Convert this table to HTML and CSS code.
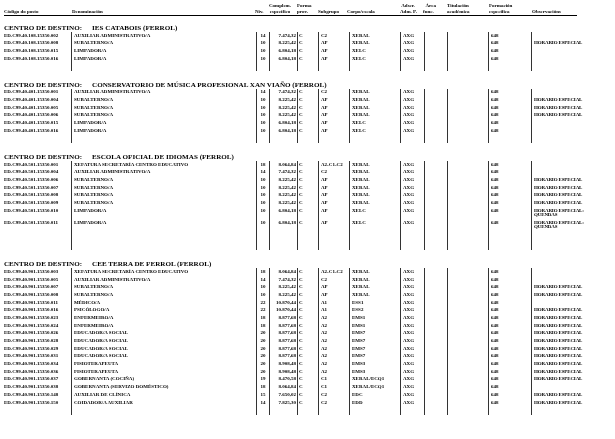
FILE: index.html
```html
<!DOCTYPE html>
<html lang="gl">
<head>
<meta charset="utf-8">
<title>Relación de postos</title>
<link rel="stylesheet" href="styles.css">
</head>
<body>
<div class="page">
  <div class="head">
    <div class="h">Código do posto</div>
    <div class="h">Denominación</div>
    <div class="h">Niv.</div>
    <div class="h c">Complem.<br>específico</div>
    <div class="h">Forma<br>prov.</div>
    <div class="h">Subgrupo</div>
    <div class="h">Corpo/escala</div>
    <div class="h">&nbsp;Adscr.<br>Adm. P.</div>
    <div class="h">&nbsp;&nbsp;Área<br>func.</div>
    <div class="h">Titulación<br>académica</div>
    <div class="h">Formación<br>específica</div>
    <div class="h">Observacións</div>
  </div>

  <section class="sec">
    <h2 class="title"><span class="lbl">CENTRO DE DESTINO:</span>IES CATABOIS (FERROL)</h2>
    <div class="row"><div>ED.C99.40.108.15350.002</div><div>AUXILIAR ADMINISTRATIVO/A</div><div>14</div><div>7.474,32</div><div>C</div><div>C2</div><div>XERAL</div><div>AXG</div><div></div><div></div><div>648</div><div></div></div>
    <div class="row"><div>ED.C99.40.108.15350.008</div><div>SUBALTERNO/A</div><div>10</div><div>8.225,42</div><div>C</div><div>AP</div><div>XERAL</div><div>AXG</div><div></div><div></div><div>648</div><div>HORARIO ESPECIAL</div></div>
    <div class="row"><div>ED.C99.40.108.15350.015</div><div>LIMPADOR/A</div><div>10</div><div>6.804,18</div><div>C</div><div>AP</div><div>XELC</div><div>AXG</div><div></div><div></div><div>648</div><div></div></div>
    <div class="row"><div>ED.C99.40.108.15350.016</div><div>LIMPADOR/A</div><div>10</div><div>6.804,18</div><div>C</div><div>AP</div><div>XELC</div><div>AXG</div><div></div><div></div><div>648</div><div></div></div>
    <div class="row end"><div></div><div></div><div></div><div></div><div></div><div></div><div></div><div></div><div></div><div></div><div></div><div></div></div>
  </section>

  <section class="sec">
    <h2 class="title"><span class="lbl">CENTRO DE DESTINO:</span>CONSERVATORIO DE MÚSICA PROFESIONAL XAN VIAÑO (FERROL)</h2>
    <div class="row"><div>ED.C99.40.401.15350.001</div><div>AUXILIAR ADMINISTRATIVO/A</div><div>14</div><div>7.474,32</div><div>C</div><div>C2</div><div>XERAL</div><div>AXG</div><div></div><div></div><div>648</div><div></div></div>
    <div class="row"><div>ED.C99.40.401.15350.004</div><div>SUBALTERNO/A</div><div>10</div><div>8.225,42</div><div>C</div><div>AP</div><div>XERAL</div><div>AXG</div><div></div><div></div><div>648</div><div>HORARIO ESPECIAL</div></div>
    <div class="row"><div>ED.C99.40.401.15350.005</div><div>SUBALTERNO/A</div><div>10</div><div>8.225,42</div><div>C</div><div>AP</div><div>XERAL</div><div>AXG</div><div></div><div></div><div>648</div><div>HORARIO ESPECIAL</div></div>
    <div class="row"><div>ED.C99.40.401.15350.006</div><div>SUBALTERNO/A</div><div>10</div><div>8.225,42</div><div>C</div><div>AP</div><div>XERAL</div><div>AXG</div><div></div><div></div><div>648</div><div>HORARIO ESPECIAL</div></div>
    <div class="row"><div>ED.C99.40.401.15350.015</div><div>LIMPADOR/A</div><div>10</div><div>6.804,18</div><div>C</div><div>AP</div><div>XELC</div><div>AXG</div><div></div><div></div><div>648</div><div></div></div>
    <div class="row"><div>ED.C99.40.401.15350.016</div><div>LIMPADOR/A</div><div>10</div><div>6.804,18</div><div>C</div><div>AP</div><div>XELC</div><div>AXG</div><div></div><div></div><div>648</div><div></div></div>
    <div class="row end"><div></div><div></div><div></div><div></div><div></div><div></div><div></div><div></div><div></div><div></div><div></div><div></div></div>
  </section>

  <section class="sec">
    <h2 class="title"><span class="lbl">CENTRO DE DESTINO:</span>ESCOLA OFICIAL DE IDIOMAS (FERROL)</h2>
    <div class="row"><div>ED.C99.40.501.15350.001</div><div>XEFATURA SECRETARÍA CENTRO EDUCATIVO</div><div>18</div><div>8.064,84</div><div>C</div><div>A2-C1-C2</div><div>XERAL</div><div>AXG</div><div></div><div></div><div>648</div><div></div></div>
    <div class="row"><div>ED.C99.40.501.15350.004</div><div>AUXILIAR ADMINISTRATIVO/A</div><div>14</div><div>7.474,32</div><div>C</div><div>C2</div><div>XERAL</div><div>AXG</div><div></div><div></div><div>648</div><div></div></div>
    <div class="row"><div>ED.C99.40.501.15350.006</div><div>SUBALTERNO/A</div><div>10</div><div>8.225,42</div><div>C</div><div>AP</div><div>XERAL</div><div>AXG</div><div></div><div></div><div>648</div><div>HORARIO ESPECIAL</div></div>
    <div class="row"><div>ED.C99.40.501.15350.007</div><div>SUBALTERNO/A</div><div>10</div><div>8.225,42</div><div>C</div><div>AP</div><div>XERAL</div><div>AXG</div><div></div><div></div><div>648</div><div>HORARIO ESPECIAL</div></div>
    <div class="row"><div>ED.C99.40.501.15350.008</div><div>SUBALTERNO/A</div><div>10</div><div>8.225,42</div><div>C</div><div>AP</div><div>XERAL</div><div>AXG</div><div></div><div></div><div>648</div><div>HORARIO ESPECIAL</div></div>
    <div class="row"><div>ED.C99.40.501.15350.009</div><div>SUBALTERNO/A</div><div>10</div><div>8.225,42</div><div>C</div><div>AP</div><div>XERAL</div><div>AXG</div><div></div><div></div><div>648</div><div>HORARIO ESPECIAL</div></div>
    <div class="row"><div>ED.C99.40.501.15350.010</div><div>LIMPADOR/A</div><div>10</div><div>6.804,18</div><div>C</div><div>AP</div><div>XELC</div><div>AXG</div><div></div><div></div><div>648</div><div>HORARIO ESPECIAL:<br>QUENDAS</div></div>
    <div class="row"><div>ED.C99.40.501.15350.011</div><div>LIMPADOR/A</div><div>10</div><div>6.804,18</div><div>C</div><div>AP</div><div>XELC</div><div>AXG</div><div></div><div></div><div>648</div><div>HORARIO ESPECIAL:<br>QUENDAS</div></div>
    <div class="row end long"><div></div><div></div><div></div><div></div><div></div><div></div><div></div><div></div><div></div><div></div><div></div><div></div></div>
  </section>

  <section class="sec">
    <h2 class="title"><span class="lbl">CENTRO DE DESTINO:</span>CEE TERRA DE FERROL (FERROL)</h2>
    <div class="row"><div>ED.C99.40.901.15350.003</div><div>XEFATURA SECRETARÍA CENTRO EDUCATIVO</div><div>18</div><div>8.064,84</div><div>C</div><div>A2-C1-C2</div><div>XERAL</div><div>AXG</div><div></div><div></div><div>648</div><div></div></div>
    <div class="row"><div>ED.C99.40.901.15350.005</div><div>AUXILIAR ADMINISTRATIVO/A</div><div>14</div><div>7.474,32</div><div>C</div><div>C2</div><div>XERAL</div><div>AXG</div><div></div><div></div><div>648</div><div></div></div>
    <div class="row"><div>ED.C99.40.901.15350.007</div><div>SUBALTERNO/A</div><div>10</div><div>8.225,42</div><div>C</div><div>AP</div><div>XERAL</div><div>AXG</div><div></div><div></div><div>648</div><div>HORARIO ESPECIAL</div></div>
    <div class="row"><div>ED.C99.40.901.15350.008</div><div>SUBALTERNO/A</div><div>10</div><div>8.225,42</div><div>C</div><div>AP</div><div>XERAL</div><div>AXG</div><div></div><div></div><div>648</div><div>HORARIO ESPECIAL</div></div>
    <div class="row"><div>ED.C99.40.901.15350.011</div><div>MÉDICO/A</div><div>22</div><div>10.870,44</div><div>C</div><div>A1</div><div>ESS1</div><div>AXG</div><div></div><div></div><div>648</div><div></div></div>
    <div class="row"><div>ED.C99.40.901.15350.016</div><div>PSICÓLOGO/A</div><div>22</div><div>10.870,44</div><div>C</div><div>A1</div><div>ESS2</div><div>AXG</div><div></div><div></div><div>648</div><div>HORARIO ESPECIAL</div></div>
    <div class="row"><div>ED.C99.40.901.15350.023</div><div>ENFERMEIRO/A</div><div>18</div><div>8.877,68</div><div>C</div><div>A2</div><div>EMS1</div><div>AXG</div><div></div><div></div><div>648</div><div>HORARIO ESPECIAL</div></div>
    <div class="row"><div>ED.C99.40.901.15350.024</div><div>ENFERMEIRO/A</div><div>18</div><div>8.877,68</div><div>C</div><div>A2</div><div>EMS1</div><div>AXG</div><div></div><div></div><div>648</div><div>HORARIO ESPECIAL</div></div>
    <div class="row"><div>ED.C99.40.901.15350.026</div><div>EDUCADOR/A SOCIAL</div><div>20</div><div>8.877,68</div><div>C</div><div>A2</div><div>EMS7</div><div>AXG</div><div></div><div></div><div>648</div><div>HORARIO ESPECIAL</div></div>
    <div class="row"><div>ED.C99.40.901.15350.028</div><div>EDUCADOR/A SOCIAL</div><div>20</div><div>8.877,68</div><div>C</div><div>A2</div><div>EMS7</div><div>AXG</div><div></div><div></div><div>648</div><div>HORARIO ESPECIAL</div></div>
    <div class="row"><div>ED.C99.40.901.15350.029</div><div>EDUCADOR/A SOCIAL</div><div>20</div><div>8.877,68</div><div>C</div><div>A2</div><div>EMS7</div><div>AXG</div><div></div><div></div><div>648</div><div>HORARIO ESPECIAL</div></div>
    <div class="row"><div>ED.C99.40.901.15350.031</div><div>EDUCADOR/A SOCIAL</div><div>20</div><div>8.877,68</div><div>C</div><div>A2</div><div>EMS7</div><div>AXG</div><div></div><div></div><div>648</div><div>HORARIO ESPECIAL</div></div>
    <div class="row"><div>ED.C99.40.901.15350.034</div><div>FISIOTERAPEUTA</div><div>20</div><div>8.908,48</div><div>C</div><div>A2</div><div>EMS3</div><div>AXG</div><div></div><div></div><div>648</div><div>HORARIO ESPECIAL</div></div>
    <div class="row"><div>ED.C99.40.901.15350.036</div><div>FISIOTERAPEUTA</div><div>20</div><div>8.908,48</div><div>C</div><div>A2</div><div>EMS3</div><div>AXG</div><div></div><div></div><div>648</div><div>HORARIO ESPECIAL</div></div>
    <div class="row"><div>ED.C99.40.901.15350.037</div><div>GOBERNANTA (COCIÑA)</div><div>19</div><div>8.470,58</div><div>C</div><div>C1</div><div>XERAL/ECQ1</div><div>AXG</div><div></div><div></div><div>648</div><div>HORARIO ESPECIAL</div></div>
    <div class="row"><div>ED.C99.40.901.15350.038</div><div>GOBERNANTA (SERVIZO DOMÉSTICO)</div><div>18</div><div>8.064,84</div><div>C</div><div>C1</div><div>XERAL/ECQ1</div><div>AXG</div><div></div><div></div><div>648</div><div></div></div>
    <div class="row"><div>ED.C99.40.901.15350.148</div><div>AUXILIAR DE CLÍNICA</div><div>15</div><div>7.650,02</div><div>C</div><div>C2</div><div>EDC</div><div>AXG</div><div></div><div></div><div>648</div><div>HORARIO ESPECIAL</div></div>
    <div class="row"><div>ED.C99.40.901.15350.150</div><div>COIDADOR/A AUXILIAR</div><div>14</div><div>7.825,30</div><div>C</div><div>C2</div><div>EDD</div><div>AXG</div><div></div><div></div><div>648</div><div>HORARIO ESPECIAL</div></div>
    <div class="row end"><div></div><div></div><div></div><div></div><div></div><div></div><div></div><div></div><div></div><div></div><div></div><div></div></div>
  </section>
</div>
</body>
</html>
```

FILE: styles.css
```css
html, body {
  margin: 0;
  padding: 0;
  background: #fff;
}

.page {
  padding: 2px 4px 0 4px;
  font-family: "Liberation Serif", "Times New Roman", serif;
  font-weight: bold;
  color: #000;
  filter: grayscale(1);
}

.head {
  display: grid;
  grid-template-columns: 68px 183px 8px 34px 21px 29px 53px 23px 24px 42px 43px 45px;
  width: 573px;
  border-bottom: 1px solid #000;
  font-size: 5px;
  line-height: 6px;
  height: 13px;
  align-items: end;
}

.head .h {
  white-space: nowrap;
}

.head .c {
  text-align: center;
}

.sec {
  margin-top: 8px;
}

.sec + .sec {
  margin-top: 10px;
}

.title {
  margin: 0;
  font-size: 7.1px;
  line-height: 8px;
  height: 8px;
  font-weight: bold;
  white-space: nowrap;
}

.title .lbl {
  margin-right: 10px;
}

.row {
  display: grid;
  grid-template-columns: 67px 185px 13px 28px 21px 31px 51px 24px 23px 41px 43px 60px;
  font-size: 5px;
  line-height: 4.4px;
}

.row > div {
  padding: 1.65px 0 1.65px 2px;
  border-left: 1px solid #333;
  white-space: nowrap;
  min-height: 4.4px;
}

.row > div:first-child {
  border-left: 0;
  padding-left: 0;
}

.row > div:nth-child(3) {
  text-align: center;
  padding-left: 0;
}

.row > div:nth-child(4) {
  text-align: right;
  padding-left: 0;
  padding-right: 1px;
}

.row > div:nth-child(5) {
  padding-left: 1px;
}

.row > div:nth-child(12) {
  letter-spacing: -0.15px;
}

.row.end > div {
  height: 8px;
  padding: 0;
  min-height: 0;
}

.row.end.long > div {
  height: 19px;
}
```
